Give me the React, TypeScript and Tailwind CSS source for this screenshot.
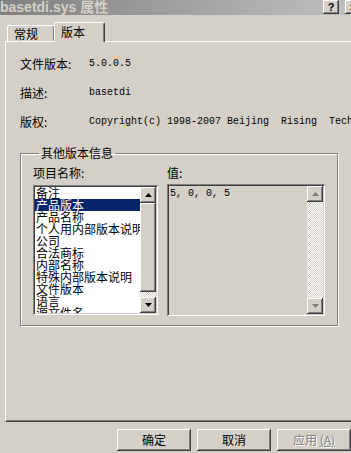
import React from 'react';

const raised =
  'shadow-[inset_-1px_-1px_0_#404040,inset_1px_1px_0_#ffffff,inset_-2px_-2px_0_#808080,inset_2px_2px_0_#d4d0c8]';
const sunken =
  'shadow-[inset_1px_1px_0_#808080,inset_-1px_-1px_0_#ffffff,inset_2px_2px_0_#404040,inset_-2px_-2px_0_#d4d0c8]';
const track = 'bg-[repeating-conic-gradient(#ffffff_0_25%,#d4d0c8_0_50%)] bg-[length:2px_2px]';

const cjk = "font-['SimSun','Noto_Sans_CJK_SC',sans-serif]";
const mono = "font-['Liberation_Mono','DejaVu_Sans_Mono',monospace]";

const Arrow: React.FC<{ up?: boolean; disabled?: boolean }> = ({ up, disabled }) => (
  <svg width="7" height="4" viewBox="0 0 7 4">
    <path d={up ? 'M3.5 0 L7 4 L0 4 Z' : 'M0 0 L7 0 L3.5 4 Z'} fill={disabled ? '#808080' : '#000000'} />
  </svg>
);

const ScrollBar: React.FC<{ disabled?: boolean }> = ({ disabled }) => (
  <div className="flex flex-col w-4 h-full shrink-0">
    <div className={`h-4 shrink-0 bg-[#d4d0c8] flex items-center justify-center ${raised}`}>
      <Arrow up disabled={disabled} />
    </div>
    {disabled ? (
      <div className={`flex-1 ${track}`} />
    ) : (
      <div className="flex-1 flex flex-col">
        <div className={`h-[89px] bg-[#d4d0c8] ${raised}`} />
        <div className={`flex-1 ${track}`} />
      </div>
    )}
    <div className={`h-4 shrink-0 bg-[#d4d0c8] flex items-center justify-center ${raised}`}>
      <Arrow disabled={disabled} />
    </div>
  </div>
);

export default function App() {
  const items = [
    '备注',
    '产品版本',
    '产品名称',
    '个人用内部版本说明',
    '公司',
    '合法商标',
    '内部名称',
    '特殊内部版本说明',
    '文件版本',
    '语言',
    '源文件名',
  ];

  const rows = [
    { label: '文件版本:', value: '5.0.0.5' },
    { label: '描述:', value: 'basetdi' },
    { label: '版权:', value: 'Copyright(c) 1998-2007 Beijing  Rising  Technology' },
  ];

  return (
    <div className={`w-[351px] h-[453px] bg-[#d4d0c8] overflow-hidden text-black ${cjk}`}>
      {/* Title bar */}
      <div className="h-[15px] flex items-center justify-between bg-gradient-to-r from-[#808080] to-[#c0c0c0]">
        <span className="text-[14px] font-bold leading-none text-[#d4d0c8] font-['Liberation_Sans','Noto_Sans_CJK_SC',sans-serif] -mt-[2px]">
          basetdi.sys 属性
        </span>
        <div className="flex gap-[6px] -mr-[10px] self-start">
          <div className={`w-4 h-[14px] bg-[#d4d0c8] flex items-center justify-center text-[11px] font-bold leading-none font-['Liberation_Sans',sans-serif] ${raised}`}>
            ?
          </div>
          <div className={`w-4 h-[14px] bg-[#d4d0c8] flex items-center justify-center text-[11px] font-bold leading-none font-['Liberation_Sans',sans-serif] ${raised}`}>
            ×
          </div>
        </div>
      </div>

      {/* Tabs */}
      <div className="flex items-end pl-[7px] mt-[7px] h-[19px] relative z-10">
        <div className="w-[47px] h-[16px] border-t border-l border-white rounded-tl-[2px] shadow-[inset_-1px_0_0_#808080] text-[12px] leading-[14px] pl-[6px] pt-[1px]">
          常规
        </div>
        <div className="w-[51px] h-[20px] -mb-px bg-[#d4d0c8] border-t border-l border-white border-r border-r-[#404040] rounded-tl-[2px] rounded-tr-[2px] shadow-[inset_-1px_0_0_#808080] text-[12px] leading-[14px] pl-[6px] pt-[2px]">
          版本
        </div>
      </div>

      {/* Tab panel */}
      <div className="ml-[5px] w-[370px] h-[381px] border-t border-l border-white border-b border-b-[#404040] shadow-[inset_0_-1px_0_#808080]">
        <div className="flex flex-col gap-[13px] pt-[14px] pl-[14px] text-[12px] leading-[16px]">
          {rows.map((r) => (
            <div key={r.label} className="flex">
              <span className="w-[69px] shrink-0">{r.label}</span>
              <span className={`${mono} text-[10px] whitespace-pre`}>{r.value}</span>
            </div>
          ))}
        </div>

        {/* Group box */}
        <fieldset className="ml-[14px] mt-[16px] w-[317px] h-[180px] border border-[#808080] shadow-[inset_1px_1px_0_#ffffff,1px_1px_0_#ffffff] px-[12px] pb-[6px]">
          <legend className="ml-[6px] px-[2px] text-[12px] leading-[14px]">其他版本信息</legend>
          <div className="flex gap-[9px] mt-[6px]">
            <div className="flex flex-col">
              <span className="text-[12px] leading-[14px] mb-[5px]">项目名称:</span>
              <div className={`w-[125px] h-[130px] bg-white p-[2px] flex ${sunken}`}>
                <div className="flex-1 overflow-hidden">
                  {items.map((it, i) => (
                    <div
                      key={it}
                      className={`h-[12px] text-[12px] leading-[12px] whitespace-nowrap pl-[1px] ${
                        i === 1 ? 'bg-[#0a246a] text-white' : ''
                      }`}
                    >
                      {it}
                    </div>
                  ))}
                </div>
                <ScrollBar />
              </div>
            </div>
            <div className="flex flex-col">
              <span className="text-[12px] leading-[14px] mb-[4px]">值:</span>
              <div className={`w-[158px] h-[132px] bg-[#d4d0c8] p-[2px] flex ${sunken}`}>
                <div className={`flex-1 ${mono} text-[10px] leading-[14px] pl-[1px] pt-px whitespace-pre`}>5, 0, 0, 5</div>
                <ScrollBar disabled />
              </div>
            </div>
          </div>
        </fieldset>
      </div>

      {/* Buttons */}
      <div className="flex gap-[6px] pl-[117px] mt-[7px]">
        <button className={`w-[75px] h-[22px] bg-[#d4d0c8] text-[12px] ${raised}`}>确定</button>
        <button className={`w-[75px] h-[22px] bg-[#d4d0c8] text-[12px] ${raised}`}>取消</button>
        <button className={`w-[75px] h-[22px] bg-[#d4d0c8] text-[12px] text-[#808080] [text-shadow:1px_1px_0_#ffffff] ${raised}`}>
          应用 <span className="underline">(A)</span>
        </button>
      </div>
    </div>
  );
}
